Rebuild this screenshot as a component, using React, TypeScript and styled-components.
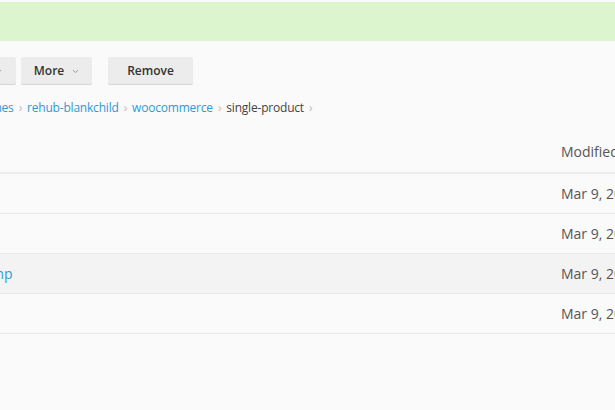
import React from 'react';
import styled, { createGlobalStyle } from 'styled-components';

const GlobalStyle = createGlobalStyle`
  html, body {
    margin: 0;
    padding: 0;
    background: #fafafa;
    font-family: 'Open Sans', 'Liberation Sans', sans-serif;
    font-size: 13px;
    color: #444;
  }
`;

type FileRow = { name: string; modified: string; link?: boolean };

const files: FileRow[] = [
  { name: 'meta.php', modified: 'Mar 9, 2020 10:42 AM' },
  { name: 'price.php', modified: 'Mar 9, 2020 10:42 AM' },
  { name: 'product-image-amp', modified: 'Mar 9, 2020 10:42 AM', link: true },
  { name: 'rating.php', modified: 'Mar 9, 2020 10:42 AM' },
];

const crumbs = ['wp-content', 'themes', 'rehub-blankchild', 'woocommerce'];

const Chevron: React.FC = () => (
  <svg width="7" height="5" viewBox="0 0 7 5">
    <path d="M1 1.2 L3.5 3.6 L6 1.2" fill="none" stroke="#999" strokeWidth="1" />
  </svg>
);

const App: React.FC = () => {
  return (
    <>
      <GlobalStyle />
      <Page>
        <Banner />
        <Shift>
          <Toolbar>
            <Button $width={70}>Upload</Button>
            <Button $width={85}>
              Actions <Chevron />
            </Button>
            <Button $width={71}>
              More <Chevron />
            </Button>
            <Button $width={85} $gapBefore={16}>
              Remove
            </Button>
          </Toolbar>
          <Breadcrumb>
            {crumbs.map((item) => (
              <React.Fragment key={item}>
                <CrumbLink>{item}</CrumbLink>
                <Sep>›</Sep>
              </React.Fragment>
            ))}
            <Current>single-product</Current>
            <Sep>›</Sep>
          </Breadcrumb>
          <Table>
            <HeadRow>
              <Cell />
              <HeadCell>Name</HeadCell>
              <HeadCell>Modified</HeadCell>
            </HeadRow>
            {files.map((item) => (
              <Row key={item.name} $hover={!!item.link}>
                <Cell />
                <NameCell $link={!!item.link}>{item.name}</NameCell>
                <Cell>{item.modified}</Cell>
              </Row>
            ))}
          </Table>
        </Shift>
      </Page>
    </>
  );
};

export default App;

const Page = styled.div`
  width: 615px;
  height: 410px;
  overflow: hidden;
  padding-top: 2px;
  box-sizing: border-box;
`;

const Banner = styled.div`
  height: 39px;
  background: #dcf5cf;
`;

const Shift = styled.div`
  margin-left: -160px;
  padding-left: 16px;
  width: 1000px;
`;

const Toolbar = styled.div`
  display: flex;
  align-items: center;
  gap: 5px;
  padding-top: 16px;
  height: 27px;
`;

const Button = styled.div<{ $width: number; $gapBefore?: number }>`
  width: ${(p) => p.$width}px;
  height: 27px;
  margin-left: ${(p) => (p.$gapBefore ? p.$gapBefore - 5 : 0)}px;
  display: flex;
  align-items: center;
  justify-content: center;
  gap: 8px;
  background: #ececec;
  border-radius: 2px;
  box-shadow: 0 1px 0 #d4d4d4;
  font-size: 12px;
  font-weight: 600;
  color: #333;
  svg {
    margin-top: 1px;
  }
`;

const Breadcrumb = styled.div`
  display: flex;
  align-items: center;
  height: 18px;
  margin-top: 14px;
  padding-left: 42px;
  font-size: 12px;
  letter-spacing: -0.2px;
`;

const CrumbLink = styled.span`
  color: #2d9bd6;
`;

const Current = styled.span`
  color: #444;
`;

const Sep = styled.span`
  color: #bbb;
  padding: 0 5px;
`;

const Table = styled.div`
  margin-top: 14px;
  display: flex;
  flex-direction: column;
  font-size: 14px;
`;

const HeadRow = styled.div`
  display: grid;
  grid-template-columns: 20px 677px 200px;
  height: 42px;
  align-items: center;
  border-bottom: 2px solid #ececec;
`;

const Row = styled.div<{ $hover: boolean }>`
  display: grid;
  grid-template-columns: 20px 677px 200px;
  height: 40px;
  box-sizing: border-box;
  align-items: center;
  border-bottom: 1px solid #e8e8e8;
  background: ${(p) => (p.$hover ? '#f3f3f3' : 'transparent')};
`;

const Cell = styled.div`
  padding-left: 8px;
  color: #555;
  white-space: nowrap;
`;

const HeadCell = styled(Cell)`
  color: #555;
`;

const NameCell = styled(Cell)<{ $link: boolean }>`
  padding-left: 7px;
  color: ${(p) => (p.$link ? '#2d9bd6' : '#444')};
`;
